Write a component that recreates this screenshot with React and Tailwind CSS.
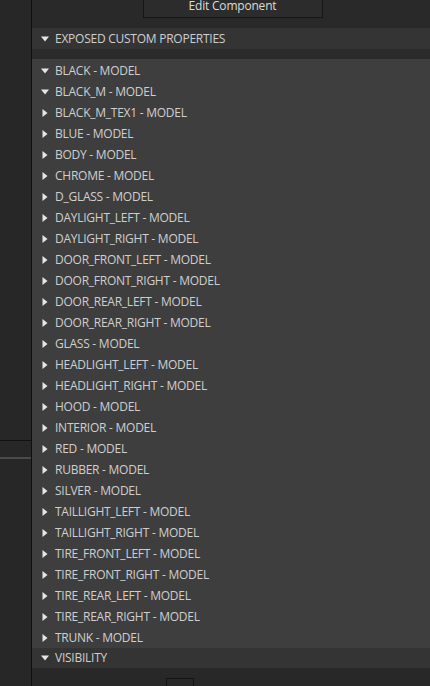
import React from 'react'

const items = [
  ['BLACK', true],
  ['BLACK_M', true],
  ['BLACK_M_TEX1'],
  ['BLUE'],
  ['BODY'],
  ['CHROME'],
  ['D_GLASS'],
  ['DAYLIGHT_LEFT'],
  ['DAYLIGHT_RIGHT'],
  ['DOOR_FRONT_LEFT'],
  ['DOOR_FRONT_RIGHT'],
  ['DOOR_REAR_LEFT'],
  ['DOOR_REAR_RIGHT'],
  ['GLASS'],
  ['HEADLIGHT_LEFT'],
  ['HEADLIGHT_RIGHT'],
  ['HOOD'],
  ['INTERIOR'],
  ['RED'],
  ['RUBBER'],
  ['SILVER'],
  ['TAILLIGHT_LEFT'],
  ['TAILLIGHT_RIGHT'],
  ['TIRE_FRONT_LEFT'],
  ['TIRE_FRONT_RIGHT'],
  ['TIRE_REAR_LEFT'],
  ['TIRE_REAR_RIGHT'],
  ['TRUNK'],
]

const Arrow = ({ open }) => (
  <svg width="8" height="8" viewBox="0 0 8 8" className="shrink-0">
    {open ? (
      <path d="M0 1.5 L8 1.5 L4 6.5 Z" fill="#e6e6e6" />
    ) : (
      <path d="M1.5 0 L6.5 4 L1.5 8 Z" fill="#e6e6e6" />
    )}
  </svg>
)

// one collapsible line of the details tree
const Row = ({ label, open, className = 'h-[21px]' }) => (
  <div className={`flex shrink-0 items-center gap-[6px] pl-[9px] ${className}`}>
    <Arrow open={open} />
    <span className="text-[12px] leading-none tracking-[-0.25px] text-[#cfcfcf]">{label}</span>
  </div>
)

export default function App() {
  return (
    <div
      className="flex h-[686px] w-[430px] overflow-hidden bg-[#282828]"
      style={{ fontFamily: '"Open Sans", "Noto Sans", sans-serif' }}
    >
      {/* left dock strip */}
      <div className="flex w-[32px] shrink-0 flex-col border-r border-[#0f0f0f] bg-[#272727]">
        <div className="h-[441px] shrink-0 border-b border-[#111]" />
        <div className="h-[16px] shrink-0" />
        <div className="h-[2px] shrink-0 bg-[#4a4a4a]" />
      </div>

      {/* details panel */}
      <div className="flex flex-1 flex-col">
        <div className="flex h-[28px] shrink-0 justify-center bg-[#292929]">
          <div className="-mt-[6px] ml-[3px] flex h-[24px] w-[180px] items-center justify-center border border-[#161616] bg-[#2c2c2c] text-[12px] tracking-[-0.2px] text-[#dcdcdc]">
            Edit Component
          </div>
        </div>

        <Row label="EXPOSED CUSTOM PROPERTIES" open className="h-[21px] bg-[#343434]" />
        <div className="h-[10px] shrink-0 bg-[#2b2b2b]" />

        <div className="flex shrink-0 flex-col bg-[#3e3e3e] pt-[1px]">
          {items.map(([name, open]) => (
            <Row key={name} label={`${name} - MODEL`} open={open} />
          ))}
        </div>

        <Row label="VISIBILITY" open className="h-[20px] bg-[#343434]" />

        <div className="flex min-h-0 flex-1 justify-center overflow-hidden bg-[#282828] pt-[10px]">
          <div className="-ml-[102px] h-[20px] w-[28px] shrink-0 border border-[#141414]" />
        </div>
      </div>
    </div>
  )
}
